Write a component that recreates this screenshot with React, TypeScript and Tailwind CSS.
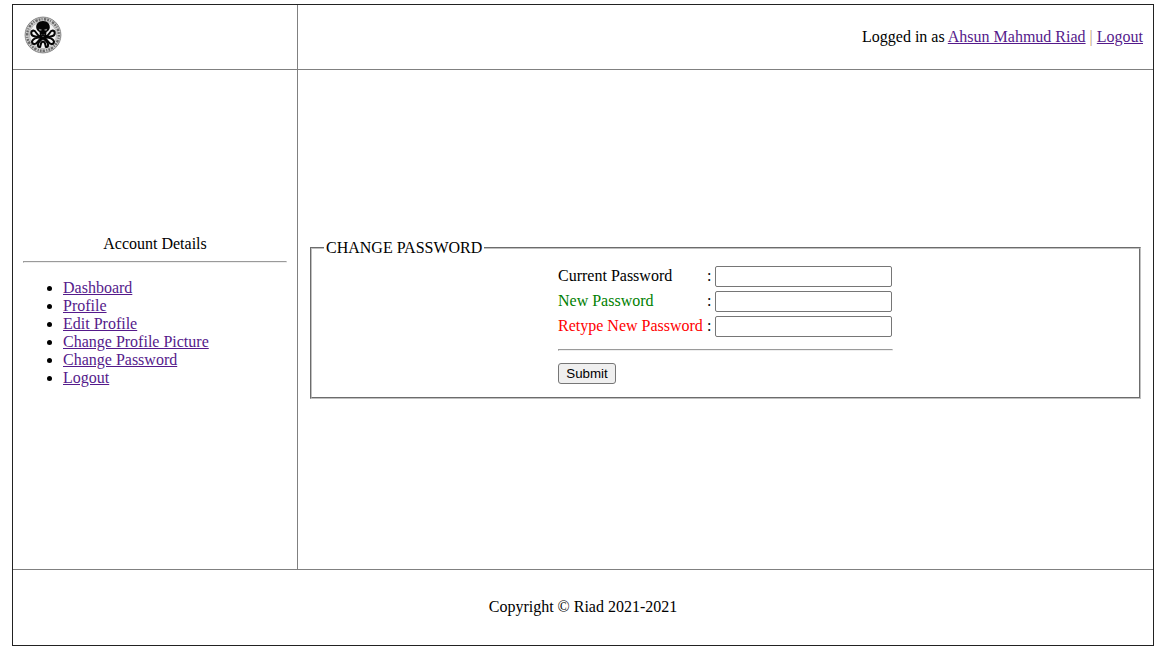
const links = ["Dashboard", "Profile", "Edit Profile", "Change Profile Picture", "Change Password", "Logout"];

const fields = [
  { label: "Current Password", color: "text-black" },
  { label: "New Password", color: "text-[#008000]" },
  { label: "Retype New Password", color: "text-[#ff0000]" },
];

function Logo() {
  return (
    <svg className="h-[38px] w-[38px]" viewBox="0 0 38 38" fill="none">
      <circle cx="19" cy="19" r="17.9" fill="#cfcfcf" stroke="#858585" strokeWidth="1" />
      <circle cx="19" cy="19" r="15.8" stroke="#6a6a6a" strokeWidth="2.4" strokeDasharray="1.7 1.2 1 1.4 2.4 1" />
      <circle cx="19" cy="19" r="13.6" fill="#f2f2f2" stroke="#aaa" strokeWidth=".8" />
      <g stroke="#050505" strokeWidth="2" strokeLinecap="round">
        <path d="M17 20C13 21.500 12.500 14.500 9.500 14.500C6.500 14.700 6.500 19 9.500 20C12.500 21 15 21 18 22" />
        <path d="M21 20C25 21.500 25.500 14.500 28.500 14.500C31.500 14.700 31.500 19 28.500 20C25.500 21 23 21 20 22" />
        <path d="M18 21C13 21.500 8.500 22.500 8 25.500C8 28.500 11.500 29 13 26.500C14.500 24 16 23 19 22" />
        <path d="M20 21C25 21.500 29.500 22.500 30 25.500C30 28.500 26.500 29 25 26.500C23.500 24 22 23 19 22" />
        <path d="M18 23C14.500 25.500 12.500 29.500 15 31C17.500 31.800 15.500 26 19 25.500C22.500 26 20.500 31.800 23 31C25.500 29.500 23.500 25.500 20 23" />
      </g>
      <path d="M19 5C14.200 5 12 8.200 12.200 11.500C12.300 13.800 13.800 15.300 15.500 15.900L16 20H22L22.500 15.900C24.200 15.300 25.700 13.800 25.800 11.500C26 8.200 23.800 5 19 5Z" fill="#050505" />
      <path d="M14.800 12.800L17.700 13.500L17.200 14.700L15.400 14.400ZM23.200 12.800L20.300 13.500L20.800 14.700L22.600 14.400Z" fill="#888" />
      <path d="M17.500 18V19.200M19 18V19.200M20.500 18V19.200" stroke="#666" strokeWidth=".5" />
    </svg>
  );
}

function Rule() {
  return <hr className="h-[2px] w-full border border-[#9a9a9a] border-r-[#eee] border-b-[#eee]" />;
}

function Link({ children }: { children: string }) {
  return <a href="#" className="text-[#551a8b] underline">{children}</a>;
}

export default function App() {
  return (
    <div className="h-[672px] overflow-hidden bg-white pt-1 pl-3 font-['Liberation_Serif',serif] text-[16px] leading-[18px] text-black">
      <div className="grid h-[642px] w-[1142px] grid-cols-[285px_855px] grid-rows-[65px_500px_75px] border border-[#222]">
        <header className="col-span-2 grid grid-cols-subgrid border-b border-[#808080]">
          <div className="border-r border-[#808080] pt-[11px] pl-[11px]"><Logo /></div>
          <div className="pt-[23px] pr-[10px] text-right">
            Logged in as <Link>Ahsun Mahmud Riad</Link> <span className="text-[#c09a70]">|</span> <Link>Logout</Link>
          </div>
        </header>
        <aside className="border-r border-b border-[#808080] px-[10px] pt-[165px]">
          <p className="mb-[8px] text-center">Account Details</p>
          <Rule />
          <ul className="mt-4 list-disc pl-10">
            {links.map((name) => <li key={name}><Link>{name}</Link></li>)}
          </ul>
        </aside>
        <main className="border-b border-[#808080] pt-[169px] pl-3">
          <fieldset className="h-[160px] w-[831px] border-2 border-[#c0c0c0] px-3 [border-style:groove]">
            <legend className="px-[2px]">CHANGE PASSWORD</legend>
            <form className="ml-[234px] w-[335px] pt-[9px]" onSubmit={(e) => e.preventDefault()}>
              <div className="flex flex-col gap-1">
                {fields.map(({ label, color }) => (
                  <label key={label} className="flex h-[21px] items-center">
                    <span className={`w-[149px] pb-[2px] whitespace-nowrap ${color}`}>{label}</span>
                    <span className="w-2 pb-[2px]">:</span>
                    <input type="password" className="h-[21px] w-[177px] rounded-[2px] border border-[#767676] bg-white px-[2px]" />
                  </label>
                ))}
              </div>
              <div className="mt-3"><Rule /></div>
              <button type="submit" className="mt-3 block h-[21px] w-[58px] rounded-[3px] border border-[#767676] bg-[#efefef] font-['Liberation_Sans',sans-serif] text-[13.333px] leading-[19px]">Submit</button>
            </form>
          </fieldset>
        </main>
        <footer className="col-span-2 pt-[28px] text-center">Copyright © Riad 2021-2021</footer>
      </div>
    </div>
  );
}
